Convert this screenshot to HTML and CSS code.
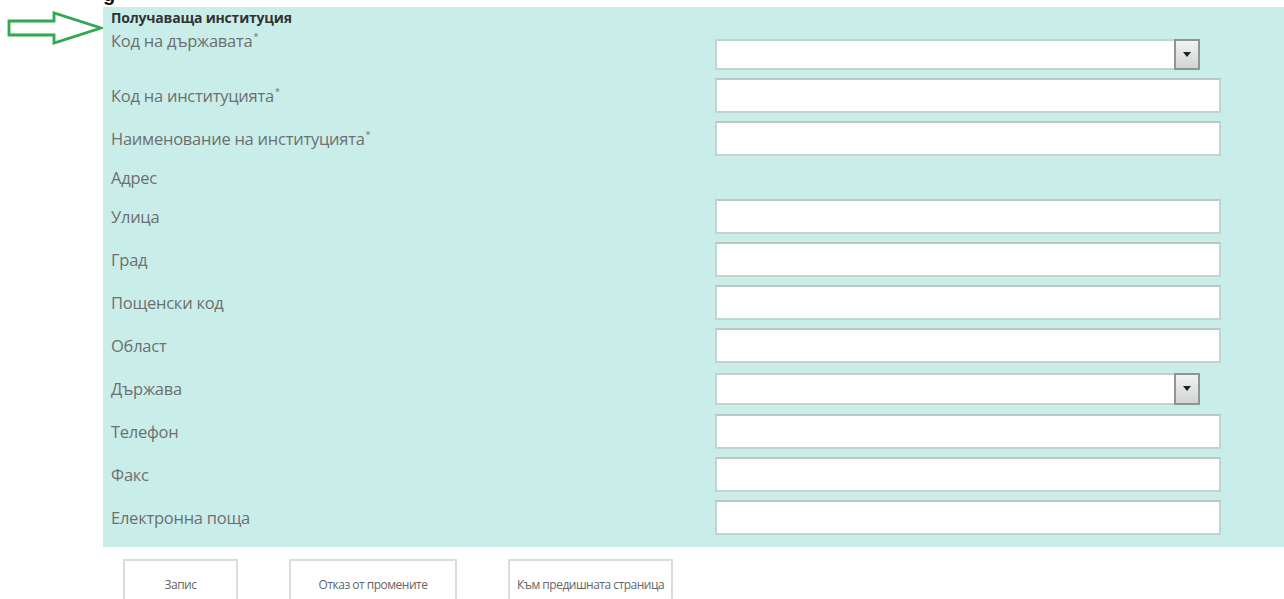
FILE: index.html
```html
<!DOCTYPE html>
<html lang="bg">
<head>
<meta charset="utf-8">
<title>Получаваща институция</title>
<link rel="stylesheet" href="styles.css">
</head>
<body>
<div class="prev-line"><span class="prev-text">g</span></div>
<div class="main">
  <div class="marker">
    <svg width="100" height="36" viewBox="0 0 100 36">
      <path d="M5 10 H50 V2 L97 17 L50 32 V24 H5 Z" fill="none" stroke="#2fa84f" stroke-width="2.8" stroke-linejoin="miter"/>
    </svg>
  </div>
  <section class="panel">
    <h2 class="panel-title">Получаваща институция</h2>
    <div class="form">
      <label class="lbl lbl-top">Код на държавата<sup>*</sup></label>
      <div class="ctl ctl-select"><div class="select"><span class="select-btn"><svg width="8" height="5" viewBox="0 0 8 5"><path d="M0 0 H8 L4 5 Z" fill="#222"/></svg></span></div></div>

      <label class="lbl">Код на институцията<sup>*</sup></label>
      <div class="ctl"><input class="field" type="text"></div>

      <label class="lbl">Наименование на институцията<sup>*</sup></label>
      <div class="ctl"><input class="field" type="text"></div>

      <div class="lbl lbl-group">Адрес</div>
      <div class="ctl ctl-empty"></div>

      <label class="lbl">Улица</label>
      <div class="ctl"><input class="field" type="text"></div>

      <label class="lbl">Град</label>
      <div class="ctl"><input class="field" type="text"></div>

      <label class="lbl">Пощенски код</label>
      <div class="ctl"><input class="field" type="text"></div>

      <label class="lbl">Област</label>
      <div class="ctl"><input class="field" type="text"></div>

      <label class="lbl">Държава</label>
      <div class="ctl ctl-select ctl-select2"><div class="select"><span class="select-btn"><svg width="8" height="5" viewBox="0 0 8 5"><path d="M0 0 H8 L4 5 Z" fill="#222"/></svg></span></div></div>

      <label class="lbl">Телефон</label>
      <div class="ctl"><input class="field" type="text"></div>

      <label class="lbl">Факс</label>
      <div class="ctl"><input class="field" type="text"></div>

      <label class="lbl">Електронна поща</label>
      <div class="ctl"><input class="field" type="text"></div>
    </div>
  </section>
</div>
<div class="actions">
  <button class="btn btn-save" type="button">Запис</button>
  <button class="btn btn-cancel" type="button">Отказ от промените</button>
  <button class="btn btn-back" type="button">Към предишната страница</button>
</div>
</body>
</html>
```
FILE: styles.css
```css
html, body {
  margin: 0;
  padding: 0;
  background: #ffffff;
  overflow: hidden;
}

body {
  font-family: "Open Sans", "Noto Sans", sans-serif;
  color: #666;
}

/* tail of the line above the form */
.prev-line {
  height: 7px;
  overflow: hidden;
  padding-left: 103px;
}
.prev-text {
  display: block;
  margin-top: -17px;
  font: bold 20px/22px "Liberation Sans", Arial, sans-serif;
  color: #111;
}

.main {
  display: flex;
  align-items: flex-start;
}

.marker {
  width: 103px;
  flex: none;
  padding-top: 4px;
  padding-left: 4px;
  box-sizing: border-box;
}
.marker svg {
  display: block;
}

.panel {
  flex: 1;
  background: #c9eeea;
  padding: 0 63px 10px 8px;
  min-height: 530px;
}

.panel-title {
  margin: 0;
  font-size: 14px;
  line-height: 22px;
  font-weight: bold;
  color: #333;
  letter-spacing: -0.2px;
}

.form {
  display: grid;
  grid-template-columns: 604px 1fr;
  row-gap: 8px;
  margin-top: 10px;
}

.lbl {
  display: flex;
  align-items: center;
  font-size: 16.5px;
  letter-spacing: -0.25px;
  color: #6e6e6e;
}
.lbl sup {
  font-size: 9px;
  align-self: flex-start;
  line-height: 1;
  margin-top: 9px;
  margin-left: 1px;
}

.lbl-top {
  align-self: start;
  margin-top: -10px;
}
.lbl-top sup {
  margin-top: 3px;
}

.lbl-group {
  height: 27px;
}

.ctl {
  display: flex;
  align-items: center;
}

.field {
  width: 100%;
  height: 35px;
  box-sizing: border-box;
  margin: 0;
  border: 2px solid #c3d3d0;
  border-top-color: #b9c8c5;
  background: #fefefe;
  padding: 0 6px;
  font: inherit;
}

.ctl-select {
  padding-right: 21px;
}

.select {
  flex: 1;
  height: 31px;
  box-sizing: border-box;
  border: 2px solid #c3d3d0;
  background: #fefefe;
  display: flex;
  justify-content: flex-end;
  align-items: stretch;
}
.ctl-select2 {
  height: 35px;
}
.ctl-select2 .select {
  height: 32px;
}

.select-btn {
  width: 26px;
  margin: -2px -2px -2px 0;
  box-sizing: border-box;
  border: 2px solid #8e9594;
  background: linear-gradient(#f2f2f2, #d2d4d4);
  display: flex;
  align-items: center;
  justify-content: center;
}

.actions {
  display: flex;
  gap: 51px;
  padding: 12px 0 0 123px;
}

.btn {
  height: 48px;
  padding: 0;
  background: #fff;
  border: 2px solid #dcdcdc;
  font-family: "Open Sans", sans-serif;
  font-size: 12px;
  letter-spacing: -0.5px;
  color: #666;
  padding-top: 2px;
}
.btn-save { width: 115px; }
.btn-cancel { width: 168px; }
.btn-back { width: 165px; }
```
